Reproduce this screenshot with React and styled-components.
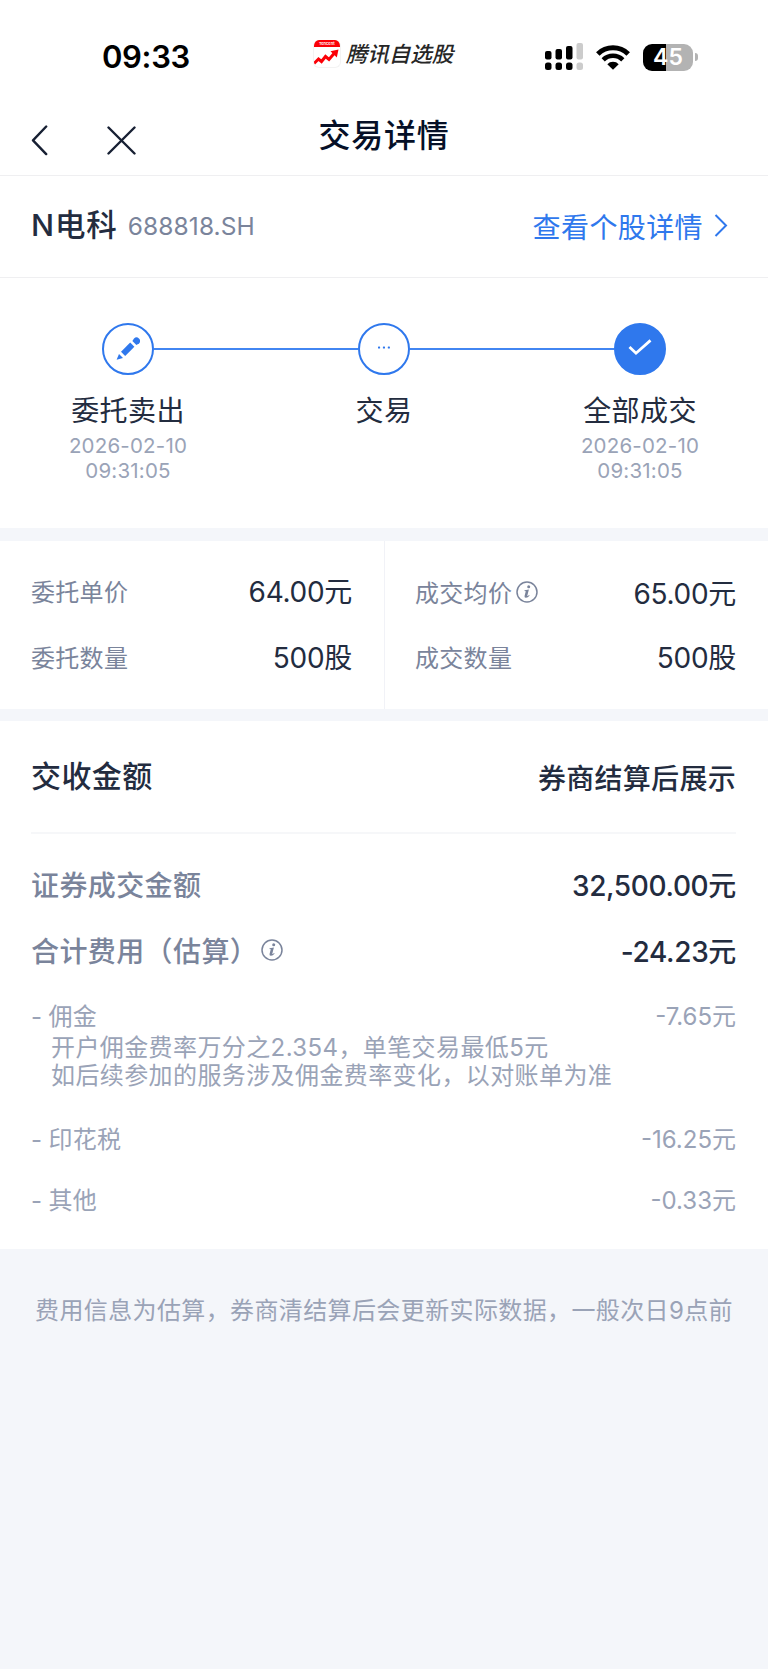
import React from "react";
import styled, { createGlobalStyle } from "styled-components";

const GlobalStyle = createGlobalStyle`
  * {
    box-sizing: border-box;
  }
  body {
    margin: 0;
    background: #f4f6fa;
    font-family: Inter, "Noto Sans CJK SC", sans-serif;
    color: #232c3f;
  }
`;

const Page = styled.main`
  width: 768px;
  min-height: 1669px;
  background: #f4f6fa;
`;

const StatusBar = styled.header`
  display: grid;
  grid-template-columns: 292px 1fr 292px;
  align-items: center;
  height: 98px;
  padding-top: 16px;
  background: #fff;
`;

const Time = styled.span`
  justify-self: center;
  margin-top: -1px;
  font-size: 31px;
  font-weight: 600;
  letter-spacing: -0.3px;
  color: #000;
`;

const Brand = styled.div`
  display: flex;
  align-items: center;
  justify-content: center;
  gap: 5px;
  margin: -7px 2px 0 0;
  font-size: 21.5px;
  font-style: italic;
  font-weight: 500;
  line-height: 30px;
  color: #262626;
`;

const BrandLogo = styled.div`
  width: 28px;
  height: 28px;
  overflow: hidden;
  border: 1px solid #f3f3f3;
  border-top: 0;
  border-radius: 6px;

  span {
    display: block;
    height: 7px;
    background: #fb0007;
    color: #fff;
    font-size: 4px;
    font-style: normal;
    font-weight: 600;
    line-height: 7px;
    text-align: center;
  }
  svg {
    display: block;
  }
`;

const Indicators = styled.div`
  display: flex;
  align-items: center;
  gap: 12px;
  padding-left: 69px;

  svg {
    display: block;
  }
`;

const BatteryWrap = styled.div`
  display: flex;
  align-items: center;
  gap: 2px;
  margin-left: 1px;

  &::after {
    content: "";
    width: 3px;
    height: 8px;
    border-radius: 0 4px 4px 0;
    background: #b3b3b3;
  }
`;

const Battery = styled.div`
  width: 50px;
  height: 27px;
  border-radius: 9px;
  background: linear-gradient(to right, #000 23px, #b3b3b3 23px);
  color: #fff;
  font-size: 23px;
  font-weight: 600;
  line-height: 27px;
  text-align: center;
`;

const NavBar = styled.nav`
  display: grid;
  grid-template-columns: 1fr auto 1fr;
  height: 78px;
  padding: 0 31px;
  border-bottom: 1px solid #efeff1;
  background: #fff;

  h1 {
    margin: 15px 0 0;
    font-size: 32px;
    font-weight: 500;
    line-height: 46px;
    letter-spacing: 0.7px;
    color: #061027;
  }
`;

const NavButtons = styled.div`
  display: flex;
  gap: 59px;
  padding-top: 27px;
`;

const StockBar = styled.section`
  display: flex;
  align-items: center;
  justify-content: space-between;
  height: 102px;
  padding: 0 40px 1px 31px;
  border-bottom: 1px solid #efeff1;
  background: #fff;
`;

const Stock = styled.div`
  display: flex;
  align-items: center;
  gap: 10px;

  strong {
    margin-top: -7px;
    font-size: 30.5px;
    font-weight: 500;
    letter-spacing: 0.9px;
  }
  span {
    font-size: 24.5px;
    letter-spacing: 0.1px;
    color: #7a849b;
  }
`;

const StockLink = styled.a`
  display: flex;
  align-items: center;
  gap: 11px;
  font-size: 28px;
  letter-spacing: 0.4px;
  color: #2f78ed;
`;

const Steps = styled.section`
  display: grid;
  grid-template-columns: repeat(3, 1fr);
  height: 250px;
  padding-top: 45px;
  background: #fff;
`;

const Step = styled.div`
  display: flex;
  flex-direction: column;
  align-items: center;
`;

const StepTrack = styled.div`
  display: flex;
  align-items: center;
  align-self: stretch;

  &::before,
  &::after {
    content: "";
    flex: 1;
    height: 2px;
    background: #4286f2;
  }
  &::before {
    visibility: ${({ $first }) => ($first ? "hidden" : "visible")};
  }
  &::after {
    visibility: ${({ $last }) => ($last ? "hidden" : "visible")};
  }
`;

const StepCircle = styled.div`
  display: flex;
  align-items: center;
  justify-content: center;
  width: 52px;
  height: 52px;
  border: 2px solid #2f78ed;
  border-radius: 50%;
  background: ${({ $filled }) => ($filled ? "#2f78ed" : "#fff")};
`;

const StepName = styled.div`
  margin-top: 16px;
  font-size: 28px;
  line-height: 40px;
  letter-spacing: 0.4px;
`;

const StepTime = styled.div`
  width: 130px;
  margin-top: 3px;
  font-size: 20.5px;
  line-height: 24.5px;
  letter-spacing: 0.2px;
  text-align: center;
  color: #9aa3b7;
`;

const Quotes = styled.section`
  display: grid;
  grid-template-columns: 1fr 1fr;
  height: 168px;
  margin: 13px 0 12px;
  background: #fff;
`;

const QuoteColumn = styled.div`
  padding: 16px 32px 0 31px;

  & + & {
    border-left: 1px solid #f1f2f7;
    padding-left: 30px;
  }
`;

const QuoteRow = styled.div`
  display: flex;
  align-items: center;
  justify-content: space-between;
  height: 66px;
  padding-top: ${({ $info }) => ($info ? "3px" : "0")};
`;

const QuoteLabel = styled.span`
  display: flex;
  align-items: center;
  gap: 4px;
  font-size: 24px;
  letter-spacing: 0.3px;
  color: #7a849b;

  svg {
    margin-top: 1px;
  }
`;

const QuoteValue = styled.span`
  font-size: 28px;
  letter-spacing: -0.3px;
`;

const Settlement = styled.section`
  height: 528px;
  padding: 0 32px 0 31px;
  background: #fff;
`;

const SettlementHead = styled.div`
  display: flex;
  align-items: center;
  justify-content: space-between;
  height: 113px;
  margin-bottom: 17px;
  border-bottom: 2px solid #f6f7f9;

  h2 {
    margin: -5px 0 0;
    font-size: 30px;
    font-weight: 500;
    letter-spacing: 0.4px;
  }
  span {
    font-size: 28px;
    font-weight: 500;
    letter-spacing: 0.3px;
  }
`;

const AmountRow = styled.div`
  display: flex;
  align-items: center;
  justify-content: space-between;
  height: 66px;
  font-weight: 500;
`;

const AmountLabel = styled.span`
  display: flex;
  align-items: center;
  gap: 3px;
  font-size: 28px;
  letter-spacing: 0.4px;
  color: #7a849b;
`;

const AmountValue = styled.span`
  font-size: 28px;
  letter-spacing: -0.35px;
`;

const FeeRow = styled.div`
  display: flex;
  align-items: center;
  justify-content: space-between;
  height: ${({ $compact }) => ($compact ? "38px" : "61px")};
  margin-top: ${({ $compact }) => ($compact ? "12px" : "0")};
  color: #9aa3b7;
  font-size: 24px;
`;

const FeeName = styled.span`
  font-size: 24px;
  letter-spacing: 0.3px;
  word-spacing: -1px;
`;

const FeeNote = styled.p`
  margin: 1px 0 17px;
  padding-left: 20px;
  font-size: 24px;
  line-height: 28px;
  letter-spacing: 0.4px;
  color: #9aa3b7;
`;

const Footnote = styled.footer`
  padding-top: 44px;
  font-size: 24px;
  line-height: 36px;
  letter-spacing: 0.38px;
  text-align: center;
  white-space: nowrap;
  color: #9aa3b7;
`;

const SignalIcon = () => (
  <svg width="39" height="28" viewBox="0 0 39 28">
    <rect x="0" y="8" width="6.5" height="8.5" rx="2" />
    <rect x="10.5" y="6" width="6.5" height="10.5" rx="2" />
    <rect x="21" y="3" width="6.5" height="13.5" rx="2" />
    <rect x="31.5" y="0" width="6.5" height="16.5" rx="2" fill="#ccc" />
    <rect x="0" y="19.5" width="6.5" height="7.5" rx="2.5" />
    <rect x="10.5" y="19.5" width="6.5" height="7.5" rx="2.5" />
    <rect x="21" y="19.5" width="6.5" height="7.5" rx="2.5" />
    <rect x="31.5" y="19.5" width="6.5" height="7.5" rx="2.5" fill="#ccc" />
  </svg>
);

const WifiIcon = () => (
  <svg width="34" height="25" viewBox="0 0 34 25">
    <path d="M1.8 9a21.8 21.8 0 0 1 30.4 0" fill="none" stroke="#000" strokeWidth="5" />
    <path d="M7.2 14.8a14 14 0 0 1 19.6 0" fill="none" stroke="#000" strokeWidth="4.6" />
    <path d="M11.3 19.2a8 8 0 0 1 11.4 0L17 24.8z" />
  </svg>
);

const TrendIcon = () => (
  <svg width="26" height="20" viewBox="0 0 26 20">
    <path d="M0 16.5 4.5 12l3 2.5 4-5 3.5 3L20.5 6" fill="none" stroke="#fb0007" strokeWidth="3" />
    <path d="M16.5 4.2 24.5 2.5l-1.7 8z" fill="#fb0007" />
  </svg>
);

const BackIcon = () => (
  <svg width="17" height="31" viewBox="0 0 17 31">
    <path d="M15.2 1.5 2 15.3l13.2 13.8" fill="none" stroke="#172033" strokeWidth="2.4" strokeLinecap="round" strokeLinejoin="round" />
  </svg>
);

const CloseIcon = () => (
  <svg width="29" height="31" viewBox="0 0 29 31">
    <path d="M1.5 2.5l26 26M27.5 2.5l-26 26" stroke="#172033" strokeWidth="2.4" strokeLinecap="round" />
  </svg>
);

const ChevronIcon = () => (
  <svg width="14" height="24" viewBox="0 0 14 24">
    <path d="M1.5 1 12 11.5 1.5 22" fill="none" stroke="#2f78ed" strokeWidth="2" />
  </svg>
);

const PencilIcon = () => (
  <svg width="24" height="24" viewBox="0 0 24 24" fill="#2f78ed">
    <path d="M5 14.8 14.2 5.6l4.2 4.2L9.2 19z" />
    <path d="M3 17 7 21 0.6 22.8z" />
    <path d="M16.4 3.9 18 1.6a3.4 3.4 0 0 1 5 4.8L20.4 8z" />
  </svg>
);

const DotsIcon = () => (
  <svg width="14" height="6" viewBox="0 0 14 6" fill="#2f78ed">
    <rect x="1" y="0.5" width="2.1" height="2.1" rx="0.6" />
    <rect x="5.9" y="0.5" width="2.1" height="2.1" rx="0.6" />
    <rect x="10.8" y="0.5" width="2.1" height="2.1" rx="0.6" />
  </svg>
);

const CheckIcon = () => (
  <svg width="26" height="22" viewBox="0 0 26 22">
    <path d="M2.5 9 9 15.2 23.5 2.4" fill="none" stroke="#fff" strokeWidth="2.8" />
  </svg>
);

const InfoIcon = () => (
  <svg width="22" height="22" viewBox="0 0 22 22">
    <circle cx="11" cy="11" r="10" fill="none" stroke="#7a849b" strokeWidth="1.5" />
    <circle cx="12.7" cy="5.7" r="1.5" fill="#7a849b" />
    <path d="M8.6 9.3 12.9 8.6 11.2 15q.6.3 1.9-1l.5.5q-1.8 2.4-3.9 2.2-1.6-.2-1.1-2l1.2-4.5-1.4-.1z" fill="#7a849b" />
  </svg>
);

const steps = [
  { name: "委托卖出", date: "2026-02-10", time: "09:31:05", icon: <PencilIcon /> },
  { name: "交易", icon: <DotsIcon /> },
  { name: "全部成交", date: "2026-02-10", time: "09:31:05", icon: <CheckIcon />, filled: true },
];

const quotes = [
  [
    { label: "委托单价", value: "64.00元" },
    { label: "委托数量", value: "500股" },
  ],
  [
    { label: "成交均价", value: "65.00元", info: true },
    { label: "成交数量", value: "500股" },
  ],
];

const App = () => {
  return (
    <Page>
      <GlobalStyle />
      <StatusBar>
        <Time>09:33</Time>
        <Brand>
          <BrandLogo>
            <span>Tencent</span>
            <TrendIcon />
          </BrandLogo>
          腾讯自选股
        </Brand>
        <Indicators>
          <SignalIcon />
          <WifiIcon />
          <BatteryWrap>
            <Battery>45</Battery>
          </BatteryWrap>
        </Indicators>
      </StatusBar>
      <NavBar>
        <NavButtons>
          <BackIcon />
          <CloseIcon />
        </NavButtons>
        <h1>交易详情</h1>
      </NavBar>
      <StockBar>
        <Stock>
          <strong>N电科</strong>
          <span>688818.SH</span>
        </Stock>
        <StockLink>
          查看个股详情
          <ChevronIcon />
        </StockLink>
      </StockBar>
      <Steps>
        {steps.map((step, i) => (
          <Step key={step.name}>
            <StepTrack $first={i === 0} $last={i === steps.length - 1}>
              <StepCircle $filled={step.filled}>{step.icon}</StepCircle>
            </StepTrack>
            <StepName>{step.name}</StepName>
            {step.date && (
              <StepTime>
                {step.date}
                <br />
                {step.time}
              </StepTime>
            )}
          </Step>
        ))}
      </Steps>
      <Quotes>
        {quotes.map((column, i) => (
          <QuoteColumn key={i}>
            {column.map((row) => (
              <QuoteRow key={row.label} $info={row.info}>
                <QuoteLabel>
                  {row.label}
                  {row.info && <InfoIcon />}
                </QuoteLabel>
                <QuoteValue>{row.value}</QuoteValue>
              </QuoteRow>
            ))}
          </QuoteColumn>
        ))}
      </Quotes>
      <Settlement>
        <SettlementHead>
          <h2>交收金额</h2>
          <span>券商结算后展示</span>
        </SettlementHead>
        <AmountRow>
          <AmountLabel>证券成交金额</AmountLabel>
          <AmountValue>32,500.00元</AmountValue>
        </AmountRow>
        <AmountRow>
          <AmountLabel>
            合计费用（估算）
            <InfoIcon />
          </AmountLabel>
          <AmountValue>-24.23元</AmountValue>
        </AmountRow>
        <FeeRow $compact>
          <FeeName>- 佣金</FeeName>
          -7.65元
        </FeeRow>
        <FeeNote>
          开户佣金费率万分之2.354，单笔交易最低5元
          <br />
          如后续参加的服务涉及佣金费率变化，以对账单为准
        </FeeNote>
        <FeeRow>
          <FeeName>- 印花税</FeeName>
          -16.25元
        </FeeRow>
        <FeeRow>
          <FeeName>- 其他</FeeName>
          -0.33元
        </FeeRow>
      </Settlement>
      <Footnote>费用信息为估算，券商清结算后会更新实际数据，一般次日9点前</Footnote>
    </Page>
  );
};

export default App;
